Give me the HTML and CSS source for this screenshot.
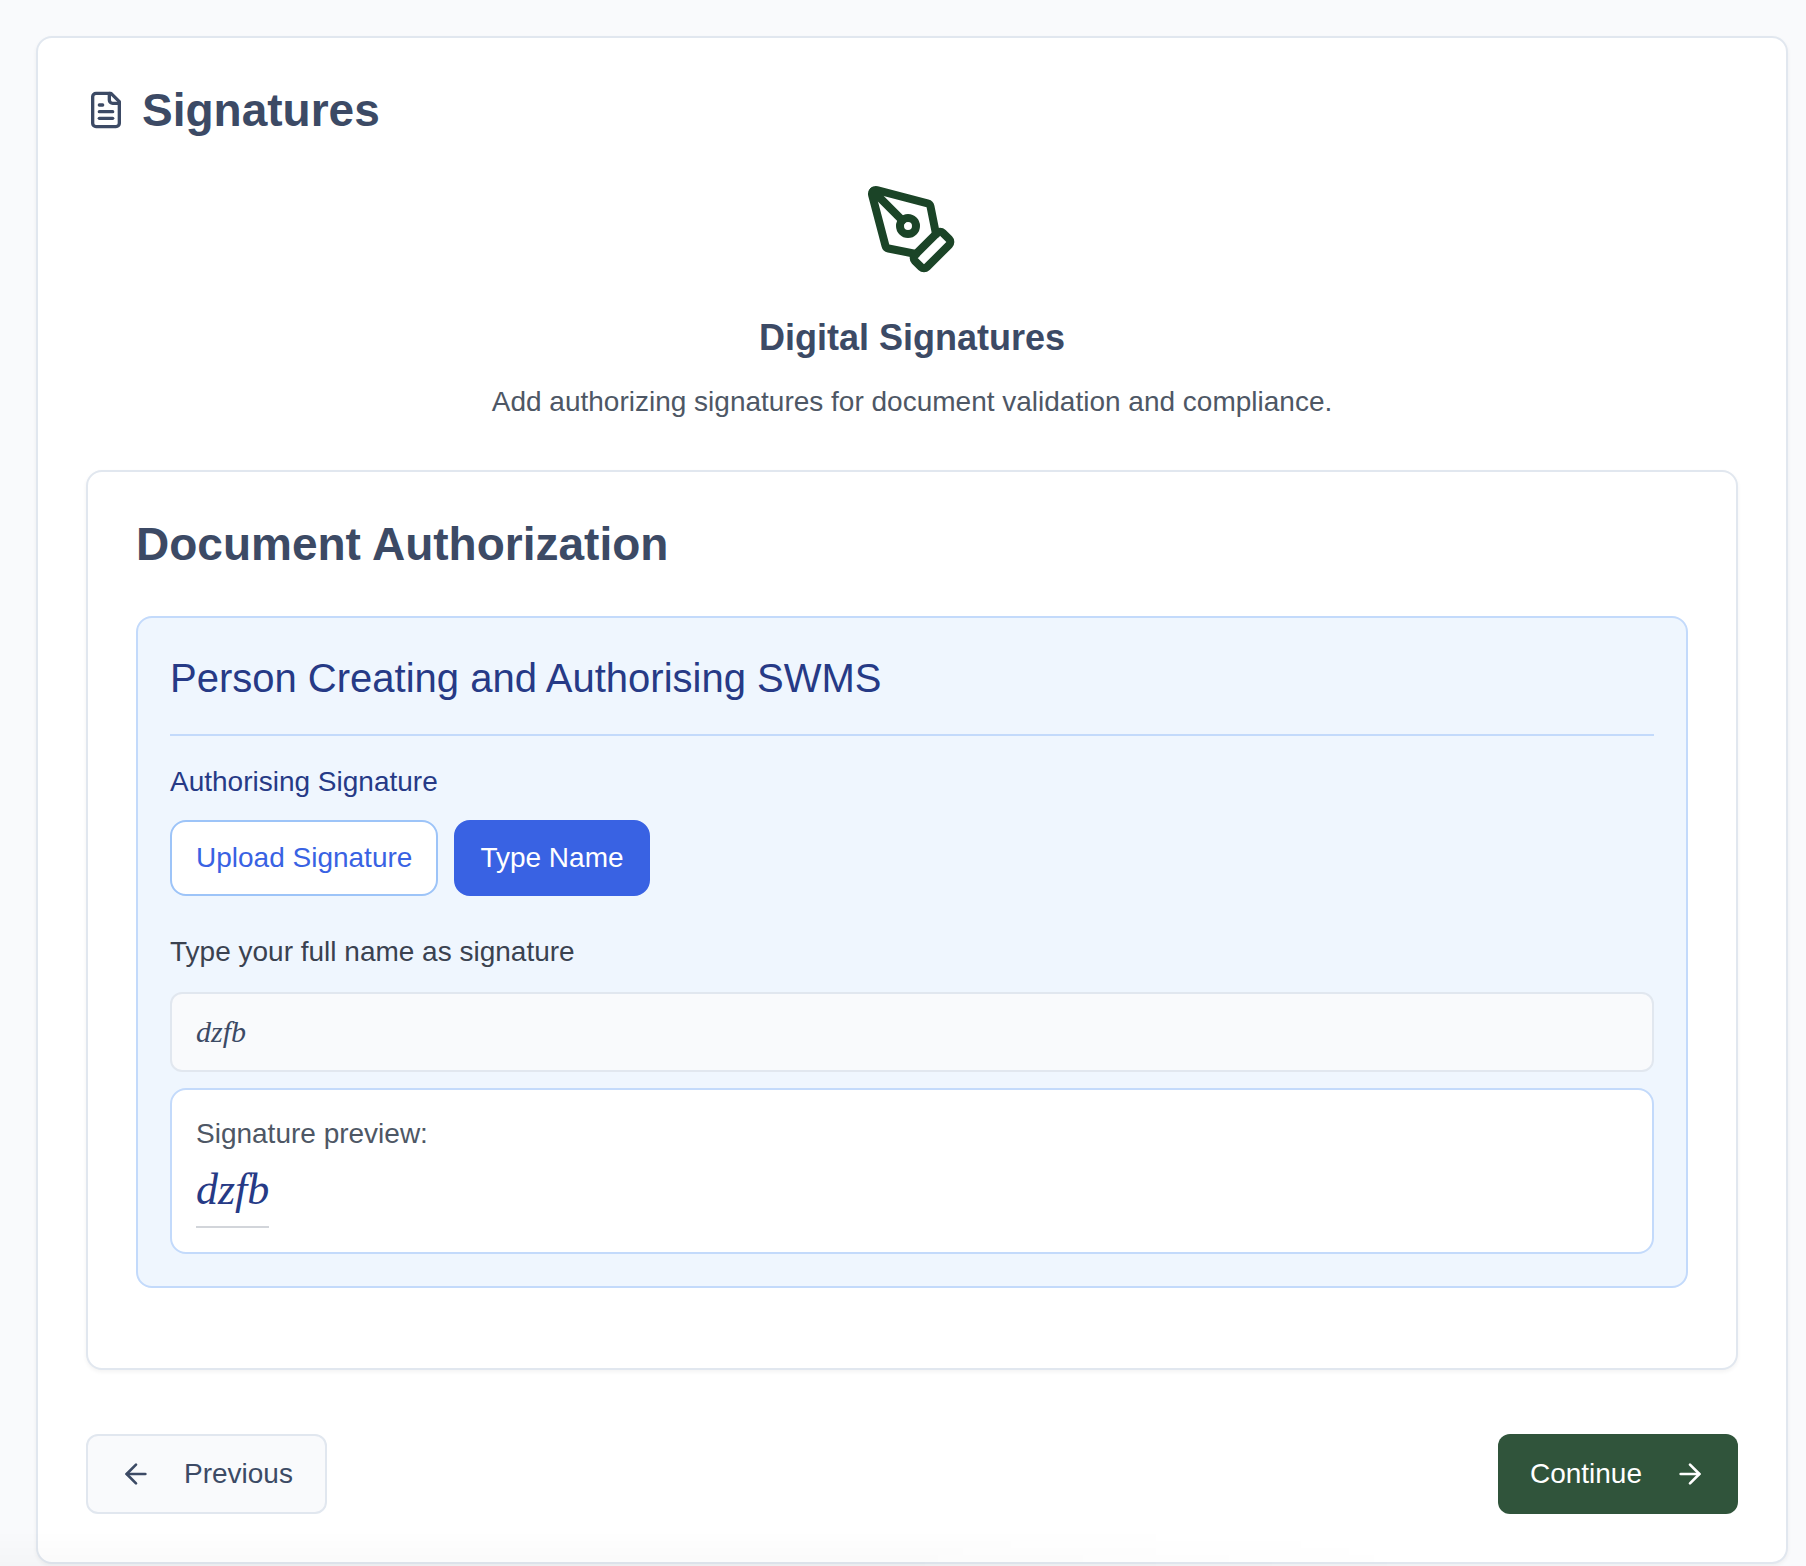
FILE: index.html
```html
<!DOCTYPE html>
<html lang="en">
<head>
<meta charset="utf-8">
<meta name="viewport" content="width=device-width, initial-scale=1">
<title>Signatures</title>
<link rel="stylesheet" href="styles.css">
</head>
<body>
<main class="card step">
  <h1 class="card-title">
    <svg class="icon-title" viewBox="0 0 24 24" aria-hidden="true"><path d="M15 2H6a2 2 0 0 0-2 2v16a2 2 0 0 0 2 2h12a2 2 0 0 0 2-2V7Z"/><path d="M14 2v4a2 2 0 0 0 2 2h4"/><path d="M10 9H8"/><path d="M16 13H8"/><path d="M16 17H8"/></svg>
    Signatures
  </h1>

  <header class="intro">
    <svg class="icon-hero" viewBox="0 0 24 24" aria-hidden="true"><path d="M15.707 21.293a1 1 0 0 1-1.414 0l-1.586-1.586a1 1 0 0 1 0-1.414l5.586-5.586a1 1 0 0 1 1.414 0l1.586 1.586a1 1 0 0 1 0 1.414z"/><path d="m18 13-1.375-6.874a1 1 0 0 0-.746-.776L3.235 2.028a1 1 0 0 0-1.207 1.207L5.35 15.879a1 1 0 0 0 .776.746L13 18"/><path d="m2.3 2.3 7.286 7.286"/><circle cx="11" cy="11" r="2"/></svg>
    <h2 class="intro-title">Digital Signatures</h2>
    <p class="intro-text">Add authorizing signatures for document validation and compliance.</p>
  </header>

  <section class="card authorization">
    <h2 class="card-title">Document Authorization</h2>
    <form class="signer">
      <h3 class="signer-title">Person Creating and Authorising SWMS</h3>
      <p class="signer-label">Authorising Signature</p>
      <div class="modes">
        <button class="mode" type="button">Upload Signature</button>
        <button class="mode mode-active" type="button">Type Name</button>
      </div>
      <label class="field-label" for="full-name">Type your full name as signature</label>
      <input class="field" id="full-name" type="text" value="dzfb">
      <div class="preview">
        <p class="preview-label">Signature preview:</p>
        <p class="preview-name">dzfb</p>
      </div>
    </form>
  </section>

  <nav class="actions">
    <button class="action action-back" type="button">
      <svg class="icon-action" viewBox="0 0 24 24" aria-hidden="true"><path d="m12 19-7-7 7-7"/><path d="M19 12H5"/></svg>
      Previous
    </button>
    <button class="action action-next" type="button">
      Continue
      <svg class="icon-action" viewBox="0 0 24 24" aria-hidden="true"><path d="M5 12h14"/><path d="m12 5 7 7-7 7"/></svg>
    </button>
  </nav>
</main>
</body>
</html>
```
FILE: styles.css
```css
* {
  box-sizing: border-box;
  margin: 0;
}

body {
  min-height: 100vh;
  padding: 36px 18px 2px 36px;
  background: #f9fafc;
  color: #3c4a65;
  font: 28px/40px "Liberation Sans", Arial, Helvetica, sans-serif;
}

/* faint shade along the bottom edge of the window, fading out to the right */
body::after {
  content: "";
  position: fixed;
  bottom: 0;
  left: 0;
  width: 80%;
  height: 36px;
  background: linear-gradient(to top, rgba(0, 0, 0, 0.02), transparent);
  mask-image: linear-gradient(to right, #000 60%, transparent);
  pointer-events: none;
}

button,
input {
  font: inherit;
}

svg {
  flex: none;
  fill: none;
  stroke: currentColor;
  stroke-width: 2;
  stroke-linecap: round;
  stroke-linejoin: round;
}

.card {
  padding: 48px;
  border: 2px solid #e1e7ef;
  border-radius: 16px;
  background: #fff;
  box-shadow: 0 2px 4px rgba(0, 0, 0, 0.05);
}

.card-title {
  display: flex;
  align-items: center;
  gap: 16px;
  font-size: 46px;
  font-weight: 700;
  line-height: 48px;
}

.icon-title {
  width: 40px;
  height: 40px;
}

.intro {
  display: flex;
  flex-direction: column;
  align-items: center;
  margin: 48px 0;
  text-align: center;
}

.icon-hero {
  width: 96px;
  height: 96px;
  margin-bottom: 32px;
  color: #1b4427;
}

.intro-title {
  margin-bottom: 16px;
  font-size: 36px;
  font-weight: 700;
  line-height: 56px;
}

.intro-text {
  color: #4e5765;
}

.authorization {
  padding-bottom: 80px;
}

.signer {
  margin-top: 48px;
  padding: 32px;
  border: 2px solid #c3dafb;
  border-radius: 16px;
  background: #eff6fe;
}

.signer-title {
  padding-bottom: 28px;
  border-bottom: 2px solid #c3dafb;
  color: #263a86;
  font-size: 40px;
  font-weight: 400;
  line-height: 56px;
}

.signer-label {
  margin: 32px 0 24px;
  color: #263a86;
  line-height: 28px;
}

.modes {
  display: flex;
  gap: 16px;
}

.mode {
  height: 76px;
  padding: 0 24px;
  border: 2px solid #9dc4f8;
  border-radius: 16px;
  background: #fff;
  color: #3962e3;
}

.mode-active {
  border-color: #3962e3;
  background: #3962e3;
  color: #fff;
}

.field-label {
  display: block;
  margin: 40px 0 24px;
  color: #3a4250;
  line-height: 32px;
}

.field {
  display: block;
  width: 100%;
  height: 80px;
  padding: 0 24px;
  border: 2px solid #e1e7ef;
  border-radius: 12px;
  background: #f9fafc;
  color: #3c4a65;
  font: italic 30px/40px "Liberation Serif", "Times New Roman", serif;
}

.preview {
  margin-top: 16px;
  padding: 24px;
  border: 2px solid #c3dafb;
  border-radius: 16px;
  background: #fff;
}

.preview-label {
  color: #4e5765;
}

.preview-name {
  width: fit-content;
  margin-top: 8px;
  padding-bottom: 8px;
  border-bottom: 2px solid #d2d5da;
  color: #263a86;
  font: italic 44px/56px "Liberation Serif", "Times New Roman", serif;
}

.actions {
  display: flex;
  justify-content: space-between;
  margin-top: 64px;
}

.action {
  display: flex;
  align-items: center;
  gap: 32px;
  height: 80px;
  padding: 0 32px;
  border: 0;
  border-radius: 12px;
}

.action-back {
  border: 2px solid #e1e7ef;
  background: #f9fafc;
  color: #3c4a65;
}

.action-next {
  background: #30543b;
  color: #fff;
}

.icon-action {
  width: 32px;
  height: 32px;
}
```
